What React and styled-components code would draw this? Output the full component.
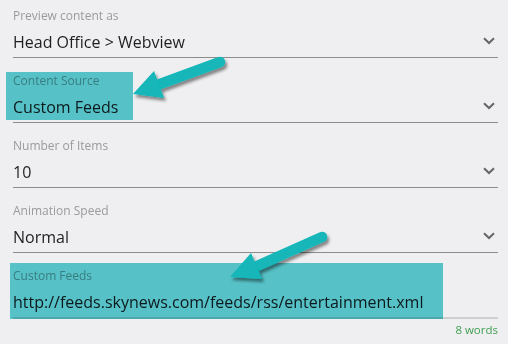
import React from "react";
import styled, { createGlobalStyle } from "styled-components";

const Global = createGlobalStyle`
  html, body { margin: 0; padding: 0; background: #efeef0; }
  body { font-family: "Open Sans", "Noto Sans", sans-serif; }
`;

const Page = styled.div`
  position: relative;
  width: 508px;
  height: 344px;
  box-sizing: border-box;
  padding: 8px 10px 0 13px;
  display: flex;
  flex-direction: column;
  gap: 15px;
  overflow: hidden;
`;

const Field = styled.div`
  display: flex;
  flex-direction: column;
  padding-bottom: 3px;
  border-bottom: ${(p) => (p.$light ? "2px solid #cfcfd1" : "1.5px solid #8c8c8e")};
`;

const Label = styled.div`
  font-size: 12px;
  line-height: 16px;
  color: #9a9a9c;
  white-space: nowrap;
`;

const ValueRow = styled.div`
  margin-top: 6px;
  display: flex;
  align-items: center;
  justify-content: space-between;
  height: 24px;
`;

const Value = styled.div`
  font-size: 16px;
  line-height: 24px;
  color: #1f1f22;
  white-space: nowrap;
`;

const Chevron = styled.svg`
  width: 12px;
  height: 8px;
  margin-right: 3px;
  margin-top: -3px;
  flex: none;
`;

const Counter = styled.div`
  margin-top: -11px;
  align-self: flex-end;
  font-size: 11.5px;
  line-height: 14px;
  color: #3f9d50;
`;

const Highlight = styled.div`
  position: absolute;
  background: #5ccfd3;
  mix-blend-mode: multiply;
  pointer-events: none;
`;

const Arrows = styled.svg`
  position: absolute;
  left: 0;
  top: 0;
  width: 508px;
  height: 344px;
  pointer-events: none;
`;

const Down = () => (
  <Chevron viewBox="0 0 12 8">
    <path d="M1 1.2 L6 6 L11 1.2" fill="none" stroke="#66666a" strokeWidth="2" />
  </Chevron>
);

const Select = ({ label, value }) => (
  <Field>
    <Label>{label}</Label>
    <ValueRow>
      <Value>{value}</Value>
      <Down />
    </ValueRow>
  </Field>
);

const Arrow = ({ tail, tip, b1, b2, base }) => (
  <g filter="url(#sh)">
    <line x1={tail[0]} y1={tail[1]} x2={base[0]} y2={base[1]} stroke="#12b6b9" strokeWidth="10.5" strokeLinecap="round" />
    <polygon points={`${tip[0]},${tip[1]} ${b1[0]},${b1[1]} ${b2[0]},${b2[1]}`} fill="#12b6b9" />
  </g>
);

export default function App() {
  return (
    <>
      <Global />
      <Page>
        <Select label="Preview content as" value="Head Office > Webview" />
        <Select label="Content Source" value="Custom Feeds" />
        <Select label="Number of Items" value="10" />
        <Select label="Animation Speed" value="Normal" />
        <Field $light>
          <Label>Custom Feeds</Label>
          <ValueRow>
            <Value>http://feeds.skynews.com/feeds/rss/entertainment.xml</Value>
          </ValueRow>
        </Field>
        <Counter>8 words</Counter>
        <Highlight style={{ left: 6, top: 72, width: 127, height: 48 }} />
        <Highlight style={{ left: 10, top: 263, width: 433, height: 56 }} />
        <Arrows viewBox="0 0 508 344">
          <defs>
            <filter id="sh" x="-20%" y="-20%" width="140%" height="160%">
              <feDropShadow dx="2" dy="3" stdDeviation="1.8" floodColor="#000" floodOpacity="0.45" />
            </filter>
          </defs>
          <Arrow tail={[220, 62]} base={[160, 84]} tip={[133, 94]} b1={[154, 71]} b2={[164, 98]} />
          <Arrow tail={[322, 237]} base={[257, 266]} tip={[230, 277]} b1={[251, 253]} b2={[262, 279]} />
        </Arrows>
      </Page>
    </>
  );
}
